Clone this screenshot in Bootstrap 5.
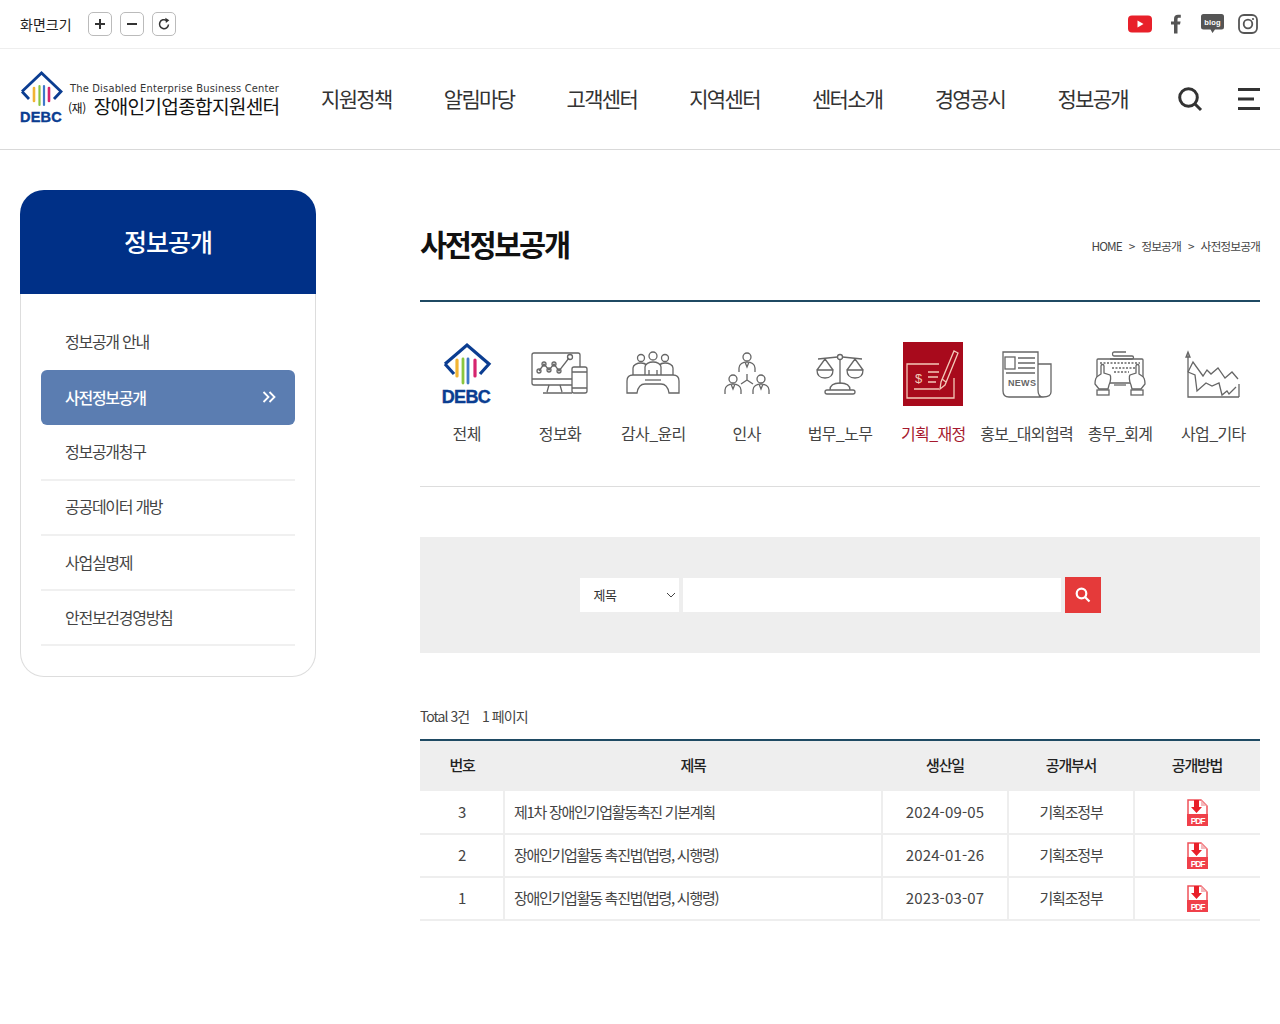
<!DOCTYPE html>
<html lang="ko">
<head>
<meta charset="utf-8">
<title>사전정보공개</title>
<link href="https://cdn.jsdelivr.net/npm/bootstrap@5.3.0/dist/css/bootstrap.min.css" rel="stylesheet">
<style>
body{font-family:"Noto Sans CJK KR","Noto Sans",sans-serif;color:#333;background:#fff;letter-spacing:-.03em;font-size:15px}
.topbar{height:49px;border-bottom:1px solid #eee;padding:0 22px 0 20px}
.zoom-label{font-size:14px;color:#222;margin-right:16px;letter-spacing:0}
.zoom-btn{width:24px;height:24px;border:1px solid #bbb;border-radius:5px;background:#fff;margin-right:8px;padding:0;display:flex;align-items:center;justify-content:center}
.mainhead{height:101px;border-bottom:1px solid #d9d9d9;padding:0 20px}
.logo-box{width:275px;flex:none}
.logo-en{font-family:"DejaVu Sans",sans-serif;font-size:9.9px;letter-spacing:.02em;color:#333;line-height:12px;white-space:nowrap}
.logo-ko{font-size:19.2px;line-height:18px;height:18px;color:#111;white-space:nowrap;letter-spacing:-.04em;margin-left:-2px;margin-top:2px}
.logo-ko small{font-size:12px;letter-spacing:-.04em;margin-right:8px;vertical-align:1px}
.logo-text{margin-top:-1px}
.gnb{width:859px;flex:none;font-size:21px;color:#333;letter-spacing:-.08em}
.gnb div{flex:1;text-align:center}
.wrap{padding:40px 20px 0;align-items:flex-start}
.side-col{width:296px;flex:none;margin-right:104px}
.side-head{height:104px;background:#003087;color:#fff;border-radius:24px 24px 0 0;font-size:25px;font-weight:500;letter-spacing:-.04em}
.side-body{height:383px;border:1px solid #ddd;border-top:0;border-radius:0 0 24px 24px;padding:20px 20px 0}
.side-item{height:55.3px;padding-left:24px;padding-bottom:2px;border-bottom:2px solid #f0f0f0;font-size:16px;color:#444;letter-spacing:-.08em}
.side-item.first{border-bottom:0;height:56px}
.side-item.on{background:#5b7db1;color:#fff;border-radius:6px;font-weight:500;border-bottom:0;padding-right:19px;justify-content:space-between}
.main-col{flex:1;min-width:0}
.page-head{height:112px;border-bottom:2px solid #1f4a63}
.page-title{font-size:29.500px;font-weight:700;color:#111;margin:0;letter-spacing:-.08em;padding-bottom:2px}
.crumb{font-size:11.800px;color:#444;letter-spacing:-.08em;gap:7px;margin-top:2px}
.cats{display:grid;grid-template-columns:repeat(9,1fr);height:185px;border-bottom:1px solid #ddd;padding-top:40px}
.cat{text-align:center;font-size:16px;color:#444;white-space:nowrap;letter-spacing:-.04em}
.cat svg{display:block;margin:0 auto 15px;width:64px;height:64px}
.cat.on{color:#a6192e}
.search-box{height:116px;background:#eee;margin-top:50px;gap:4px}
.sel{width:99px;height:34px;background:#fff;font-size:13px;color:#333;padding:0 3px 1px 14px}
.inp{width:378px;height:34px;background:#fff;border:0}
.sbtn{width:36px;height:36px;background:#e53a3a;border:0;padding:0;margin-left:0}
.total{font-size:14px;color:#444;margin-top:53px;height:33px;gap:13px;letter-spacing:-.07em}
.dtable{table-layout:fixed;width:100%;margin:0;border-top:2px solid #1f4a63}
.dtable th{background:#eee;height:51px;text-align:center;vertical-align:middle;font-size:15px;font-weight:500;color:#222;border:0;padding:0 0 2px;letter-spacing:-.08em}
.dtable td{height:43px;text-align:center;vertical-align:middle;font-size:15px;color:#444;border:0;border-bottom:2px solid #eee;border-left:2px solid #eee;padding:0;letter-spacing:-.08em}
.dtable td:first-child{border-left:0}
.dtable td.tt{text-align:left;padding-left:9px;letter-spacing:-.085em}
.dtable td.dt{letter-spacing:.01em}
.gray-ic *{fill:none;stroke:#666;stroke-width:1.3}
.gray-ic text{fill:#666;stroke:none}
.gray-ic .hand{fill:#fff}
.bold-mark{stroke-width:.4}
</style>
</head>
<body>
<div class="topbar d-flex align-items-center">
  <span class="zoom-label">화면크기</span>
  <button class="zoom-btn" aria-label="확대"><svg width="12" height="12" viewBox="0 0 12 12"><path d="M6 1v10M1 6h10" stroke="#333" stroke-width="2"/></svg></button>
  <button class="zoom-btn" aria-label="축소"><svg width="12" height="12" viewBox="0 0 12 12"><path d="M1 6h10" stroke="#333" stroke-width="2"/></svg></button>
  <button class="zoom-btn" aria-label="초기화"><svg width="14" height="14" viewBox="0 0 14 14"><path d="M11.500 7.500A4.500 4.500 0 1 1 9.500 3.400" fill="none" stroke="#333" stroke-width="1.500"/><path d="M8.300 .8l4 2.400-3.400 2.800z" fill="#333"/></svg></button>
  <div class="ms-auto d-flex align-items-center">
    <svg class="me-3" width="24" height="18" viewBox="0 0 24 18"><rect width="24" height="17" y=".5" rx="4" fill="#e8202a"/><path d="M9.500 5.500l6 3.500-6 3.500z" fill="#fff"/></svg>
    <svg width="12" height="20" viewBox="0 0 12 20" style="margin:0 20px 0 2px"><path d="M4 19.500V10.500H1V7.500H4V5C4 2 5.500.8 8 .8H10.800V3.800H9C7.800 3.800 7.500 4.300 7.500 5.300V7.500H10.600L10 10.500H7.500V19.500Z" fill="#555"/></svg>
    <svg width="23" height="21" viewBox="0 0 23 21" style="margin-right:14px;margin-left:-1px"><path d="M2.500 0H20.500A2.500 2.500 0 0 1 23 2.500V13A2.500 2.500 0 0 1 20.500 15.500H14L11.500 19 9.500 15.500H2.500A2.500 2.500 0 0 1 0 13V2.500A2.500 2.500 0 0 1 2.500 0Z" fill="#555"/><text x="11.500" y="10.500" text-anchor="middle" font-family="Liberation Sans" font-weight="700" font-size="7.500" fill="#fff" letter-spacing=".2">blog</text></svg>
    <svg width="20" height="20" viewBox="0 0 20 20"><rect x="1" y="1" width="18" height="18" rx="5" fill="none" stroke="#555" stroke-width="1.800"/><circle cx="10" cy="10" r="4.300" fill="none" stroke="#555" stroke-width="1.800"/><circle cx="15" cy="5" r="1.100" fill="#555"/></svg>
  </div>
</div>
<header class="mainhead d-flex align-items-center">
  <div class="logo-box d-flex align-items-center">
    <svg width="44" height="56" viewBox="0 0 44 56" class="flex-none" style="margin-right:6px">
      <path d="M2 20.500L21.500 2 41 20.500 34 28" fill="none" stroke="#0b3d91" stroke-width="2.800"/><path d="M2 20.500L9 28" fill="none" stroke="#0b3d91" stroke-width="2.800"/>
      <path d="M14 17v13" stroke="#f1b434" stroke-width="2.600" stroke-linecap="round"/><path d="M19.500 15v19" stroke="#8cc63f" stroke-width="2.200" stroke-linecap="round"/><path d="M24 15v19" stroke="#3f78c9" stroke-width="2.200" stroke-linecap="round"/><path d="M29 17v13" stroke="#d6246e" stroke-width="2.600" stroke-linecap="round"/>
      <text x="21" y="51" text-anchor="middle" font-family="Liberation Sans" font-weight="700" font-size="14.500" fill="#0b3d91" stroke="#0b3d91" class="bold-mark" letter-spacing=".2">DEBC</text>
    </svg>
    <div class="logo-text">
      <div class="logo-en">The Disabled Enterprise Business Center</div>
      <div class="logo-ko"><small>(재)</small>장애인기업종합지원센터</div>
    </div>
  </div>
  <nav class="gnb d-flex">
    <div>지원정책</div><div>알림마당</div><div>고객센터</div><div>지역센터</div><div>센터소개</div><div>경영공시</div><div>정보공개</div>
  </nav>
  <div class="ms-auto d-flex align-items-center" style="gap:35px">
    <svg width="26" height="26" viewBox="0 0 26 26"><circle cx="11.500" cy="11.500" r="8.800" fill="none" stroke="#333" stroke-width="3"/><path d="M18 18l6 6" stroke="#333" stroke-width="3"/></svg>
    <svg width="22" height="22" viewBox="0 0 22 22"><path d="M0 1.500h22M0 11h16M0 20.500h22" stroke="#333" stroke-width="3"/></svg>
  </div>
</header>
<div class="wrap d-flex">
  <aside class="side-col">
    <div class="side-head d-flex align-items-center justify-content-center">정보공개</div>
    <div class="side-body">
      <div class="side-item first d-flex align-items-center">정보공개 안내</div>
      <div class="side-item on d-flex align-items-center">사전정보공개<svg width="14" height="12" viewBox="0 0 14 12"><path d="M1.500 1l5 5-5 5M7.500 1l5 5-5 5" fill="none" stroke="#fff" stroke-width="1.800"/></svg></div>
      <div class="side-item d-flex align-items-center">정보공개청구</div>
      <div class="side-item d-flex align-items-center">공공데이터 개방</div>
      <div class="side-item d-flex align-items-center">사업실명제</div>
      <div class="side-item d-flex align-items-center">안전보건경영방침</div>
    </div>
  </aside>
  <main class="main-col">
    <div class="page-head d-flex justify-content-between align-items-center">
      <h1 class="page-title">사전정보공개</h1>
      <div class="crumb d-flex"><span>HOME</span><span>&gt;</span><span>정보공개</span><span>&gt;</span><span>사전정보공개</span></div>
    </div>
    <div class="cats">
      <div class="cat">
        <svg viewBox="0 0 64 64"><path d="M10 22L32 3 54 22 45 32" fill="none" stroke="#0b3d91" stroke-width="3.200"/><path d="M10 22l9 10" fill="none" stroke="#0b3d91" stroke-width="3.200"/><path d="M22 18v16" stroke="#f1b434" stroke-width="3.200" stroke-linecap="round"/><path d="M28 17v24" stroke="#8cc63f" stroke-width="2.800" stroke-linecap="round"/><path d="M33 17v24" stroke="#3f78c9" stroke-width="2.800" stroke-linecap="round"/><path d="M40 18v16" stroke="#d6246e" stroke-width="3.200" stroke-linecap="round"/><text x="31" y="61" text-anchor="middle" font-family="Liberation Sans" font-weight="700" font-size="18" fill="#0b3d91" stroke="#0b3d91" class="bold-mark">DEBC</text></svg>
        전체
      </div>
      <div class="cat">
        <svg class="gray-ic" viewBox="0 0 64 64"><path d="M44 43H6a2 2 0 0 1-2-2V13a2 2 0 0 1 2-2h44a2 2 0 0 1 2 2v12"/><path d="M21 43l-2 7M32 43l2 7M15 51h29M4 37h40"/><path d="M11 29l5-7 5 6 5-6 5 7 10-13"/><circle cx="11" cy="29" r="2"/><circle cx="16" cy="22" r="2"/><circle cx="21" cy="28" r="2"/><circle cx="26" cy="22" r="2"/><circle cx="31" cy="29" r="2"/><circle cx="42" cy="15" r="2.500"/><rect x="44" y="25" width="15" height="26" rx="2"/><path d="M44 30h15M44 46h15"/></svg>
        정보화
      </div>
      <div class="cat">
        <svg class="gray-ic" viewBox="0 0 64 64"><circle cx="20" cy="16" r="3.500"/><circle cx="32" cy="14" r="4"/><circle cx="44" cy="16" r="3.500"/><path d="M12 33v-7c0-3 4-5 8-5s5 2 5 2M52 33v-7c0-3-4-5-8-5s-5 2-5 2M24 33v-8c0-3 4-5 8-5s8 2 8 5v8M28 33v-5M36 33v-5"/><path d="M6 51V39c0-4 2-6 6-6h40c4 0 6 2 6 6v12h-10c-1-6-3-9-8-9H24c-5 0-7 3-8 9z"/><path d="M24 38h16"/></svg>
        감사_윤리
      </div>
      <div class="cat">
        <svg class="gray-ic" viewBox="0 0 64 64"><circle cx="32" cy="15" r="4"/><path d="M24 30v-4c0-4 4-6 8-6s8 2 8 6v4M30 20l2 5 2-5"/><circle cx="18" cy="37" r="4"/><path d="M10 52v-4c0-4 4-6 8-6s8 2 8 6v4M16 42l2 5 2-5"/><circle cx="46" cy="37" r="4"/><path d="M38 52v-4c0-4 4-6 8-6s8 2 8 6v4M44 42l2 5 2-5"/><path d="M32 32v6M32 38l-6 4M32 38l6 4"/></svg>
        인사
      </div>
      <div class="cat">
        <svg class="gray-ic" viewBox="0 0 64 64"><circle cx="32" cy="15" r="2.500"/><path d="M10 17l19.500-2M34.500 15L54 17M32 18v24"/><path d="M17 17L9 28M17 17l8 11M47 17l-8 11M47 17l8 11M9 28h16c0 5-3 8-8 8s-8-3-8-8zM39 28h16c0 5-3 8-8 8s-8-3-8-8z"/><path d="M22 48c0-5 4-7 10-7s10 2 10 7"/><rect x="17" y="48" width="30" height="4" rx="2"/></svg>
        법무_노무
      </div>
      <div class="cat on">
        <svg viewBox="0 0 64 64"><rect width="60" height="64" x="2" fill="#a80a1c"/><g fill="none" stroke="#f3c9b8" stroke-width="1.300"><path d="M38 22H6v34h47V36"/><path d="M27 30h11M27 35h10M27 40h8M13 47h25"/><path d="M57 11l-4-2-13 31-1 7 5-4z"/><path d="M41 37l4 3"/></g><text x="14" y="41" font-family="Liberation Sans" font-size="13" fill="#f3c9b8">$</text></svg>
        기획_재정
      </div>
      <div class="cat">
        <svg class="gray-ic" viewBox="0 0 64 64"><path d="M8 10h35v38c0 4 1 7 5 7H14c-4 0-6-2-6-6z"/><path d="M43 22h13v28c0 3-3 5-8 5"/><rect x="10" y="15" width="10" height="12"/><path d="M23 16h17M23 21h17M23 26h17M11 31h29"/><text x="13" y="44" font-family="Liberation Sans" font-weight="700" font-size="9" letter-spacing=".3">NEWS</text></svg>
        홍보_대외협력
      </div>
      <div class="cat">
        <svg class="gray-ic" viewBox="0 0 64 64"><path d="M22 17h22c2 0 2-3 0-3H26c-2 0-2-4 0-4h12"/><rect x="9" y="17" width="46" height="24" rx="1"/><path d="M12 21h40M24 26h23M26 30h15" stroke-dasharray="2 1.500" stroke-width="2.400"/><path class="hand" d="M7 42c0-5 1-7 3-8l3-2V24c0-2 3-2 3 0v7l6 2c1 1 1 6-1 10l-1 4H11z"/><path class="hand" d="M57 42c0-5-1-7-3-8l-3-2V24c0-2-3-2-3 0v7l-6 2c-1 1-1 6 1 10l1 4h9z"/><path d="M26 43h12"/><rect x="9" y="48" width="12" height="5"/><rect x="43" y="48" width="12" height="5"/></svg>
        총무_회계
      </div>
      <div class="cat">
        <svg class="gray-ic" viewBox="0 0 64 64"><path d="M7 12v43h51"/><path d="M7 10l-2 5h4z"/><path d="M7 30l5-10 10 14 4-6 4 4 7-6 7 10 7-6 6 7"/><path d="M7 30l7 3 2 16 9-8 6 3 7-3 3 12 5-4 2 3 7-7"/><path d="M58 42v13"/></svg>
        사업_기타
      </div>
    </div>
    <div class="search-box d-flex align-items-center justify-content-center">
      <div class="sel d-flex align-items-center justify-content-between">제목<svg width="10" height="6" viewBox="0 0 10 6"><path d="M1 1l4 4 4-4" fill="none" stroke="#444" stroke-width="1"/></svg></div>
      <input class="inp" type="text" aria-label="검색어">
      <button class="sbtn d-flex align-items-center justify-content-center" aria-label="검색"><svg width="16" height="16" viewBox="0 0 16 16"><circle cx="6.500" cy="6.500" r="4.800" fill="none" stroke="#fff" stroke-width="2.200"/><path d="M10 10l4.500 4.500" stroke="#fff" stroke-width="2.200"/></svg></button>
    </div>
    <div class="total d-flex align-items-start"><span>Total 3건</span><span>1 페이지</span></div>
    <table class="table dtable">
      <colgroup><col style="width:84px"><col style="width:378px"><col style="width:126px"><col style="width:126px"><col style="width:126px"></colgroup>
      <thead><tr><th>번호</th><th>제목</th><th>생산일</th><th>공개부서</th><th>공개방법</th></tr></thead>
      <tbody>
        <tr><td>3</td><td class="tt">제1차 장애인기업활동촉진 기본계획</td><td class="dt">2024-09-05</td><td>기획조정부</td><td><svg width="21" height="27" viewBox="0 0 21 27"><path d="M1 1h13l6 6v19H1z" fill="#fff" stroke="#f0525a" stroke-width="1.500"/><path d="M14 1v6h6" fill="#f4b8bb"/><path d="M7 1h5v7h3l-5.500 6L4 8h3z" fill="#e8202a"/><rect y="15" width="21" height="12" fill="#f0404a"/><text x="10.500" y="24.500" text-anchor="middle" font-family="Liberation Sans" font-weight="700" font-size="8.500" fill="#fff">PDF</text></svg></td></tr>
        <tr><td>2</td><td class="tt">장애인기업활동 촉진법(법령, 시행령)</td><td class="dt">2024-01-26</td><td>기획조정부</td><td><svg width="21" height="27" viewBox="0 0 21 27"><path d="M1 1h13l6 6v19H1z" fill="#fff" stroke="#f0525a" stroke-width="1.500"/><path d="M14 1v6h6" fill="#f4b8bb"/><path d="M7 1h5v7h3l-5.500 6L4 8h3z" fill="#e8202a"/><rect y="15" width="21" height="12" fill="#f0404a"/><text x="10.500" y="24.500" text-anchor="middle" font-family="Liberation Sans" font-weight="700" font-size="8.500" fill="#fff">PDF</text></svg></td></tr>
        <tr><td>1</td><td class="tt">장애인기업활동 촉진법(법령, 시행령)</td><td class="dt">2023-03-07</td><td>기획조정부</td><td><svg width="21" height="27" viewBox="0 0 21 27"><path d="M1 1h13l6 6v19H1z" fill="#fff" stroke="#f0525a" stroke-width="1.500"/><path d="M14 1v6h6" fill="#f4b8bb"/><path d="M7 1h5v7h3l-5.500 6L4 8h3z" fill="#e8202a"/><rect y="15" width="21" height="12" fill="#f0404a"/><text x="10.500" y="24.500" text-anchor="middle" font-family="Liberation Sans" font-weight="700" font-size="8.500" fill="#fff">PDF</text></svg></td></tr>
      </tbody>
    </table>
  </main>
</div>
<script src="https://cdn.jsdelivr.net/npm/bootstrap@5.3.0/dist/js/bootstrap.bundle.min.js"></script>
</body>
</html>
